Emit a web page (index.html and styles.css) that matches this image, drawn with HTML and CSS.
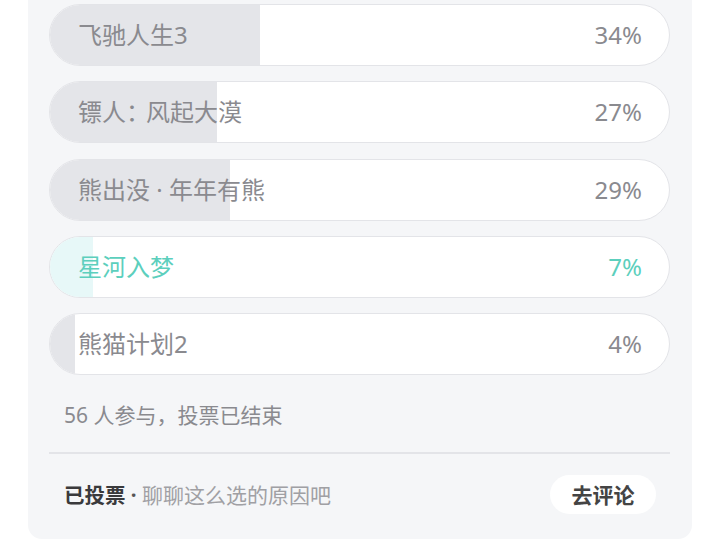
FILE: index.html
```html
<!DOCTYPE html>
<html lang="zh-CN">
<head>
<meta charset="utf-8">
<link rel="stylesheet" href="styles.css">
</head>
<body>
<div class="card">
  <div class="options">
    <div class="opt">
      <div class="fill" style="width:34%"></div>
      <span class="label">飞驰人生3</span><span class="pct">34%</span>
    </div>
    <div class="opt">
      <div class="fill" style="width:27%"></div>
      <span class="label">镖人<span class="colon">：</span>风起大漠</span><span class="pct">27%</span>
    </div>
    <div class="opt">
      <div class="fill" style="width:29%"></div>
      <span class="label">熊出没 · 年年有熊</span><span class="pct">29%</span>
    </div>
    <div class="opt selected">
      <div class="fill" style="width:7%"></div>
      <span class="label">星河入梦</span><span class="pct">7%</span>
    </div>
    <div class="opt">
      <div class="fill" style="width:4%"></div>
      <span class="label">熊猫计划2</span><span class="pct">4%</span>
    </div>
  </div>
  <div class="status">56 人参与，投票已结束</div>
  <div class="divider"></div>
  <div class="bottom">
    <div class="voted"><b>已投票</b><span class="dot"> · </span><span class="hint">聊聊这么选的原因吧</span></div>
    <div class="btn">去评论</div>
  </div>
</div>
</body>
</html>
```
FILE: styles.css
```css
html, body {
  margin: 0;
  padding: 0;
  background: #ffffff;
  font-family: "Noto Sans", "Noto Sans CJK SC", sans-serif;
}
.card {
  margin-left: 28px;
  width: 664px;
  box-sizing: border-box;
  background: #f5f6f8;
  border-radius: 0 0 14px 14px;
  padding: 4px 22px 25px 21px;
}
.options {
  display: flex;
  flex-direction: column;
  gap: 15.25px;
}
.opt {
  position: relative;
  height: 62px;
  box-sizing: border-box;
  border: 1.5px solid #e3e4e8;
  border-radius: 31px;
  background: #ffffff;
  overflow: hidden;
  display: flex;
  align-items: center;
  justify-content: space-between;
  padding: 0 27px 0 28px;
  color: #8a8a8f;
  font-size: 24px;
}
.fill {
  position: absolute;
  left: 0;
  top: 0;
  bottom: 0;
  background: #e4e5e9;
}
.label, .pct {
  position: relative;
  line-height: 30px;
}
.colon {
  letter-spacing: -4px;
}
.selected {
  color: #5ccfbd;
}
.selected .fill {
  background: #e7f8f8;
}
.status {
  margin-top: 26px;
  padding-left: 15px;
  font-size: 21px;
  line-height: 28px;
  color: #8a8a8f;
}
.divider {
  margin-top: 23px;
  height: 1.5px;
  background: #e3e4e8;
}
.bottom {
  display: flex;
  align-items: center;
  justify-content: space-between;
  padding: 21px 14px 0 15px;
}
.voted {
  font-size: 20.5px;
  color: #3a3a3c;
  display: flex;
  align-items: baseline;
}
.voted b {
  font-weight: 700;
}
.dot {
  color: #555555;
  white-space: pre;
  font-weight: 700;
}
.hint {
  color: #a0a0a4;
  font-size: 21px;
}
.btn {
  width: 106px;
  height: 39px;
  border-radius: 20px;
  background: #ffffff;
  display: flex;
  align-items: center;
  justify-content: center;
  font-size: 21px;
  font-weight: 700;
  color: #444444;
}
```
